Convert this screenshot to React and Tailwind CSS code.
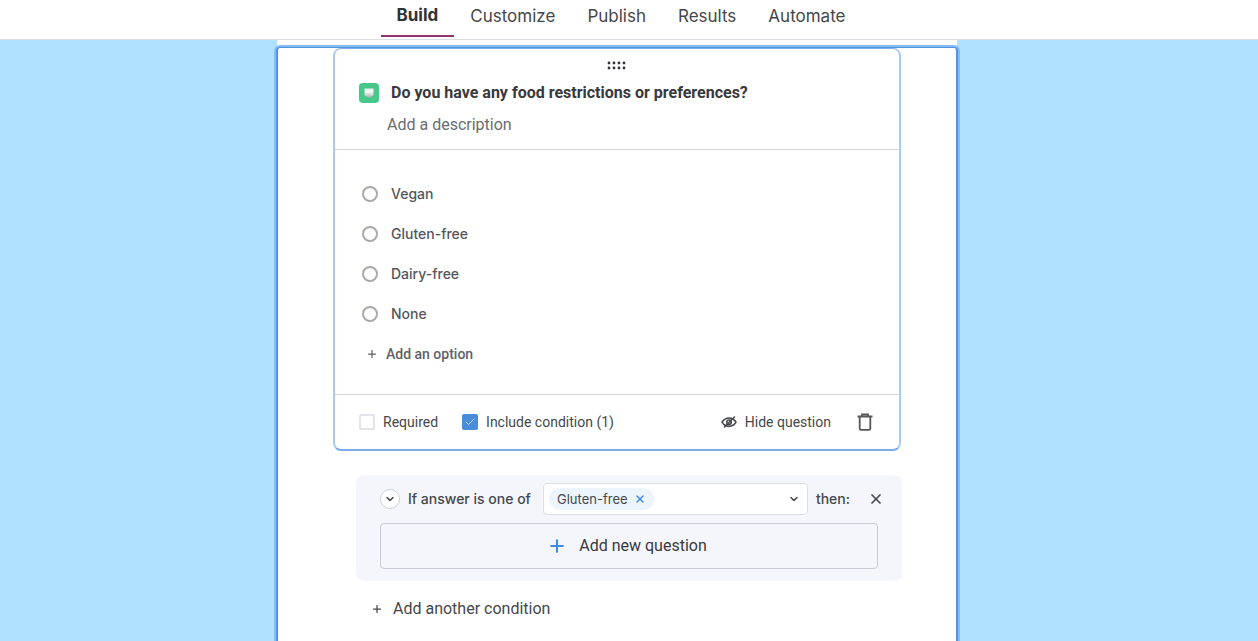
import { useState } from "react";
import { Check, ChevronDown, Plus, X } from "lucide-react";

const TABS = ["Build", "Customize", "Publish", "Results", "Automate"];
const OPTIONS = ["Vegan", "Gluten-free", "Dairy-free", "None"];

function DragDots() {
  return (
    <svg width="20" height="9" viewBox="0 0 20 9" fill="#303236">
      {[2, 7, 12, 17].map((x) => (
        <g key={x}>
          <circle cx={x} cy="2" r="1.4" />
          <circle cx={x} cy="7" r="1.4" />
        </g>
      ))}
    </svg>
  );
}

function QuestionIcon() {
  return (
    <svg width="20" height="20" viewBox="0 0 20 20" className="shrink-0">
      <defs>
        <linearGradient id="cup" x1="0" y1="0" x2="0" y2="1">
          <stop offset="0" stopColor="#e6eeec" />
          <stop offset="0.35" stopColor="#f6f7f7" />
          <stop offset="0.65" stopColor="#d5dad9" />
          <stop offset="1" stopColor="#9fb0a9" />
        </linearGradient>
      </defs>
      <rect width="20" height="20" rx="4" fill="#48c78b" />
      <path d="M5.5 5.5h9v6.500q0 1-1 1h-.5l-1.200 1.500H8.200L7 13h-.5q-1 0-1-1z" fill="url(#cup)" />
    </svg>
  );
}

function HiddenEye() {
  return (
    <svg width="16" height="14" viewBox="0 0 16 14" fill="none" stroke="#45474b" strokeWidth="1.6" strokeLinecap="round">
      <path d="M1 7.200C3 4 5.500 3 8 3s5 1 7 4.200c-2 3.200-4.500 4.200-7 4.200S3 10.400 1 7.200z" />
      <circle cx="8" cy="7.200" r="2.200" />
      <path d="M13.500 2 3.500 12" />
    </svg>
  );
}

function TrashIcon() {
  return (
    <svg width="16" height="18" viewBox="0 0 16 18" fill="none" stroke="#55575b" strokeWidth="1.800">
      <path d="M0.500 3.500h15M5 3.200V1.400h6v1.800M2.700 3.800v11.700q0 1.300 1.300 1.300h8q1.300 0 1.300-1.300V3.800" />
    </svg>
  );
}

function CheckField({ label, checked, onChange }) {
  return (
    <label className="flex items-center gap-2">
      <span className="relative block size-4">
        <input
          type="checkbox"
          checked={checked}
          onChange={onChange}
          className="block size-4 appearance-none rounded-xs border-2 border-[#e2e4e9] bg-white checked:border-[#488cdc] checked:bg-[#488cdc]"
        />
        {checked && (
          <Check className="pointer-events-none absolute top-0.5 left-0.5 size-3 text-[#b9dcff]" />
        )}
      </span>
      {label}
    </label>
  );
}

export default function App() {
  const [answer, setAnswer] = useState("");
  const [required, setRequired] = useState(false);
  const [conditional, setConditional] = useState(true);

  return (
    <div className="flex min-h-screen flex-col bg-[#b0e1ff] font-[Roboto,sans-serif] text-[#45474b]">
      <header className="border-b border-[#d9dce2] bg-white pr-4">
        <nav className="flex h-[39px] justify-center pb-0.5 font-[Inter,sans-serif] text-[17px]">
          {TABS.map((tab) => (
            <a
              key={tab}
              href="#"
              className={
                tab === "Build"
                  ? "flex items-center border-b-2 border-[#96336b] px-4 pb-1 font-bold text-[#303236]"
                  : "flex items-center px-4 pb-1"
              }
            >
              {tab}
            </a>
          ))}
        </nav>
      </header>

      <main className="flex grow flex-col items-center pr-6">
        <div className="h-[7px] w-full max-w-[680px] bg-white" />
        <div className="w-full max-w-[682px] grow rounded-t-sm border-x-2 border-t border-[#5094e2] bg-white px-[55px] pb-5 shadow-[0_0_0_2px_#86bbfb]">
          <section className="rounded-lg border-x-2 border-t border-b-2 border-x-[#a9c9f6] border-t-[#7fb0ee] border-b-[#7dabea]">
            <div className="h-[101px] border-b border-[#d3d5dc] px-6 pt-3">
              <div className="flex h-2 items-center justify-center">
                <DragDots />
              </div>
              <div className="mt-3 flex h-6 items-center gap-3">
                <QuestionIcon />
                <h1 className="text-base font-bold text-[#38393d]">
                  Do you have any food restrictions or preferences?
                </h1>
              </div>
              <input
                aria-label="Description"
                placeholder="Add a description"
                className="mt-2 block h-6 w-full pl-7 text-base outline-none placeholder:text-[#6a6c72]"
              />
            </div>

            <div className="border-b border-[#d3d5dc] px-[27px] pt-6 pb-5">
              {OPTIONS.map((option) => (
                <label
                  key={option}
                  className="flex h-10 items-center gap-[13px] font-[Inter,sans-serif] text-sm font-medium text-[#54565b]"
                >
                  <input
                    type="radio"
                    name="food"
                    checked={answer === option}
                    onChange={() => setAnswer(option)}
                    className="size-4 appearance-none rounded-full border-2 border-[#a7a9ae] bg-white checked:border-[5px] checked:border-[#488cdc]"
                  />
                  {option}
                </label>
              ))}
              <button type="button" className="flex h-10 items-center gap-2 pl-1 text-sm font-medium text-[#606267]">
                <Plus className="size-3" strokeWidth={2.5} />
                Add an option
              </button>
            </div>

            <div className="flex h-[54px] items-center pr-[26px] pl-6 text-sm">
              <div className="flex items-center gap-6">
                <CheckField label="Required" checked={required} onChange={() => setRequired(!required)} />
                <CheckField
                  label="Include condition (1)"
                  checked={conditional}
                  onChange={() => setConditional(!conditional)}
                />
              </div>
              <button type="button" className="mr-[26px] ml-auto flex items-center gap-2">
                <HiddenEye />
                Hide question
              </button>
              <button type="button" aria-label="Delete question">
                <TrashIcon />
              </button>
            </div>
          </section>

          <section className="-mr-px mt-6 ml-[23px] rounded-lg bg-[#f5f6fb] px-6 pt-2 pb-3">
            <div className="flex h-8 items-center gap-2 font-[Inter,sans-serif] text-sm">
              <button
                type="button"
                aria-label="Collapse condition"
                className="flex size-5 items-center justify-center rounded-full border border-[#cfd1d8] bg-white"
              >
                <ChevronDown className="size-3" strokeWidth={3} />
              </button>
              <label htmlFor="answers" className="min-w-[127px] font-medium whitespace-nowrap">
                If answer is one of
              </label>
              <div className="flex h-8 min-w-0 grow items-center rounded-sm border border-[#dcdee5] bg-white px-[5px]">
                <span className="flex h-[22px] items-center gap-1.5 rounded-full bg-[#ecf5fe] px-2 text-[13px] whitespace-nowrap">
                  Gluten-free
                  <button type="button" aria-label="Remove Gluten-free" className="text-[#3f8ae2]">
                    <X className="size-3" strokeWidth={3} />
                  </button>
                </span>
                <select id="answers" className="h-7 min-w-0 grow appearance-none outline-none">
                  <option value="" />
                  <option>Vegan</option>
                  <option>Dairy-free</option>
                  <option>None</option>
                </select>
                <ChevronDown className="pointer-events-none mr-0.5 size-3" strokeWidth={3} />
              </div>
              <span className="font-medium">then:</span>
              <button type="button" aria-label="Remove condition" className="-mr-1.5 ml-2.5">
                <X className="size-4" strokeWidth={2.5} />
              </button>
            </div>
            <button
              type="button"
              className="mt-2 flex h-[46px] w-full items-center justify-center gap-3 rounded-sm border border-[#c9ccd6] pr-1 text-base text-[#38393d]"
            >
              <Plus className="size-5 text-[#3f8ae2]" strokeWidth={2.5} />
              Add new question
            </button>
          </section>

          <button type="button" className="mt-4 ml-[38px] flex h-6 items-center gap-2.5 text-base">
            <Plus className="size-3" strokeWidth={2.5} />
            Add another condition
          </button>
        </div>
      </main>
    </div>
  );
}
